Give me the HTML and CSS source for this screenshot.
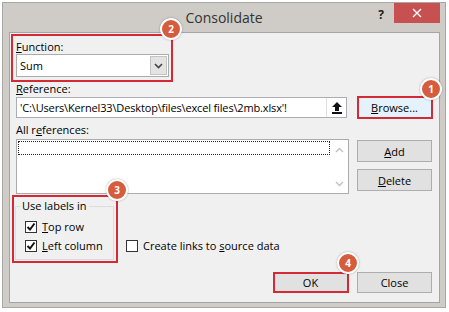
FILE: index.html
```html
<!DOCTYPE html>
<html lang="en">
<head>
  <meta charset="UTF-8" />
  <title>Consolidate</title>
  <link rel="stylesheet" href="styles.css">
</head>
<body>

  <div class="window">
    <div class="titlebar">
      <span class="title">Consolidate</span>
      <div class="controls">
        <span class="help">?</span>
        <span class="close">
          <svg width="10" height="10" viewBox="0 0 10 10"><path d="M1 1 L9 9 M9 1 L1 9" stroke="#fff" stroke-width="1.4"/></svg>
        </span>
      </div>
    </div>

    <div class="client">
      <!-- Function -->
      <div class="lbl"><u>F</u>unction:</div>
      <div class="combo">
        <span class="combo-text">Sum</span>
        <span class="combo-btn">
          <svg width="9" height="6" viewBox="0 0 9 6"><path d="M1 1 L4.5 4.5 L8 1" fill="none" stroke="#444" stroke-width="1.6"/></svg>
        </span>
      </div>

      <!-- Reference -->
      <div class="lbl ref-lbl"><u>R</u>eference:</div>
      <div class="row">
        <div class="refbox">
          <span class="ref-text">'C:\Users\Kernel33\Desktop\files\excel files\2mb.xlsx'!</span>
          <span class="ref-btn">
            <svg width="10" height="12" viewBox="0 0 10 12"><path d="M5 0 L10 5 L7 5 L7 9 L3 9 L3 5 L0 5 Z" fill="#111"/><rect x="0" y="10" width="10" height="2" fill="#111"/></svg>
          </span>
        </div>
        <button class="btn browse"><u>B</u>rowse...</button>
      </div>

      <!-- All references -->
      <div class="lbl all-lbl">All r<u>e</u>ferences:</div>
      <div class="row list-row">
        <div class="listbox">
          <div class="focus"></div>
          <div class="scroll">
            <svg width="9" height="6" viewBox="0 0 9 6"><path d="M1 5 L4.5 1.5 L8 5" fill="none" stroke="#c2c2c2" stroke-width="1.4"/></svg>
            <svg width="9" height="6" viewBox="0 0 9 6"><path d="M1 1 L4.5 4.5 L8 1" fill="none" stroke="#c2c2c2" stroke-width="1.4"/></svg>
          </div>
        </div>
        <div class="btn-col">
          <button class="btn"><u>A</u>dd</button>
          <button class="btn"><u>D</u>elete</button>
        </div>
      </div>

      <!-- Labels -->
      <div class="options">
        <fieldset class="group">
          <legend>Use labels in</legend>
          <label class="chk first"><span class="box"><svg width="10" height="10" viewBox="0 0 10 10"><path d="M1.5 5 L4 7.5 L8.5 1.5" fill="none" stroke="#111" stroke-width="2"/></svg></span><span><u>T</u>op row</span></label>
          <label class="chk"><span class="box"><svg width="10" height="10" viewBox="0 0 10 10"><path d="M1.5 5 L4 7.5 L8.5 1.5" fill="none" stroke="#111" stroke-width="2"/></svg></span><span><u>L</u>eft column</span></label>
        </fieldset>
        <label class="chk links"><span class="box"></span><span>Create links to <u>s</u>ource data</span></label>
      </div>

      <div class="actions">
        <button class="btn btn-small">OK</button>
        <button class="btn btn-small">Close</button>
      </div>
    </div>

    <!-- highlights -->
    <div class="mark mark-fn"></div>
    <div class="mark mark-browse"></div>
    <div class="mark mark-group"></div>
    <div class="mark mark-ok"></div>
    <span class="badge badge-1">1</span>
    <span class="badge badge-2">2</span>
    <span class="badge badge-3">3</span>
    <span class="badge badge-4">4</span>
  </div>

</body>
</html>
```

FILE: styles.css
```css
body { margin: 0; background: #fff; font-family: "Open Sans", sans-serif; font-size: 11px; color: #000; }
u { text-decoration: underline; text-underline-offset: 1px; }

.window { position: relative; box-sizing: border-box; width: 444px; height: 306px; margin: 2px 0 0 2px; border: 1px solid #a9a7a5; background: #cfcbc7; display: flex; flex-direction: column; }
.titlebar { height: 29px; flex: none; display: grid; grid-template-columns: 1fr auto 1fr; align-items: start; }
.title { grid-column: 2; font-size: 14px; line-height: 29px; color: #333; }
.controls { grid-column: 3; justify-self: end; display: flex; align-items: flex-start; padding-right: 5px; }
.help { font-weight: bold; font-size: 12px; line-height: 14px; margin: 5px 10px 0 0; color: #222; }
.close { width: 46px; height: 20px; background: #c75050; display: flex; align-items: center; justify-content: center; }

.client { flex: 1; margin: 0 5px 4px 6px; border: 1px solid #a5a5a5; background: #f0f0f0; padding: 7px 7px 0 6px; }
.lbl { line-height: 14px; }
.ref-lbl { margin-top: 5px; }
.all-lbl { margin-top: 5px; }

.combo { width: 153px; height: 23px; box-sizing: border-box; border: 1px solid #acacac; background: #fff; display: flex; align-items: stretch; }
.combo-text { flex: 1; padding-left: 3px; line-height: 21px; }
.combo-btn { width: 15px; margin: 1px; background: #e3e3e3; border: 1px solid #c4c4c4; display: flex; align-items: center; justify-content: center; }

.row { display: flex; align-items: flex-start; gap: 10px; }
.refbox { width: 331px; height: 21px; box-sizing: border-box; margin-top: 1px; border: 1px solid #abadb3; background: #fff; display: flex; }
.ref-text { flex: 1; padding-left: 3px; line-height: 19px; white-space: nowrap; overflow: hidden; letter-spacing: -0.15px; }
.ref-btn { width: 19px; border-left: 1px solid #e0e0e0; display: flex; align-items: center; justify-content: center; }

.btn { width: 75px; height: 22px; box-sizing: border-box; border: 1px solid #adadad; background: #e1e1e1; font: inherit; color: #000; padding: 0; }
.btn-small { height: 21px; }
.browse { background: #e5f1fb; }

.list-row { margin-top: 2px; gap: 8px; }
.listbox { width: 333px; height: 55px; box-sizing: border-box; border: 1px solid #acacac; background: #fff; display: flex; padding: 1px 0 0 1px; }
.focus { flex: 1; height: 12px; border: 1px dotted #222; }
.scroll { width: 17px; margin-left: 1px; margin-top: -1px; display: flex; flex-direction: column; justify-content: space-between; align-items: center; padding: 7px 0 6px; }
.btn-col { display: flex; flex-direction: column; gap: 7px; margin-top: 1px; }

.options { margin-top: 5px; display: flex; align-items: flex-end; }
.group { margin: 0 0 0 -1px; width: 99px; box-sizing: border-box; padding: 0 0 4px 9px; border: 1px solid #dcdcdc; }
.group legend { line-height: 14px; padding: 0 2px; margin-left: -5px; }
.chk { display: flex; align-items: center; height: 19px; gap: 5px; white-space: nowrap; }
.chk.first { margin-top: 4px; }
.box { width: 12px; height: 12px; box-sizing: border-box; border: 1px solid #333; background: #fff; display: flex; align-items: center; justify-content: center; }
.links { margin: 0 0 5px 12px; }

.actions { margin-top: 12px; display: flex; justify-content: flex-end; gap: 9px; }

.mark { position: absolute; box-sizing: border-box; border: 2px solid #d42a36; }
.mark-fn { left: 8px; top: 31px; width: 162px; height: 48px; }
.mark-browse { left: 354px; top: 93px; width: 76px; height: 23px; }
.mark-group { left: 9px; top: 192px; width: 106px; height: 68px; }
.mark-ok { left: 270px; top: 269px; width: 76px; height: 21px; }

.badge { position: absolute; width: 22px; height: 22px; box-sizing: border-box; border-radius: 50%; border: 2px solid #fff; background: #d65c3e; box-shadow: 0 0 2px rgba(0,0,0,.35); color: #fff; font-weight: bold; font-size: 10px; display: flex; align-items: center; justify-content: center; }
.badge-1 { left: 417px; top: 75px; }
.badge-2 { left: 157px; top: 15px; }
.badge-3 { left: 103px; top: 176px; }
.badge-4 { left: 334px; top: 249px; }
```
